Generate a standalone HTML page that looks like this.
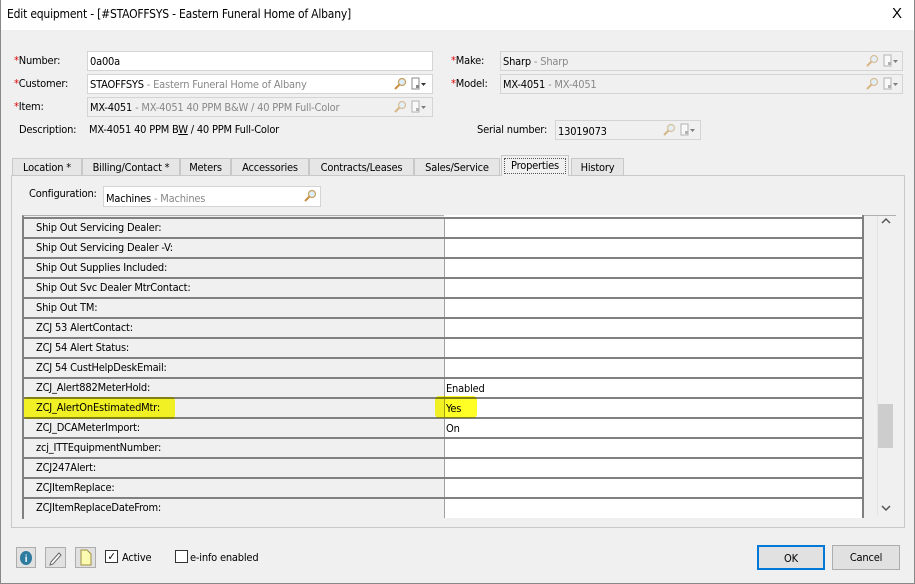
<!DOCTYPE html>
<html><head><style>
body{margin:0;width:915px;height:584px;background:#f0f0f0;font-family:"DejaVu Sans Condensed","Liberation Sans",sans-serif;font-size:11px;color:#000;position:relative;overflow:hidden;letter-spacing:-0.2px}
.a{position:absolute;white-space:nowrap}
.in{position:absolute;background:#fff;border:1px solid #d4d4d4;box-sizing:border-box;padding:3px 0 0 2px}
.gr{background:#f0f0f0}
.r{color:#d00}
.g{color:#888}
.ic{position:absolute;top:2px}
.tab{position:absolute;top:158px;height:17px;border:1px solid #c8c8c8;border-bottom:none;background:#e6e6e6;box-sizing:border-box;text-align:center;padding-top:2px}
.row{position:absolute;left:24px;width:838px;height:20px;border-top:2px solid #808080;box-sizing:border-box}
.row .l{position:absolute;left:0;top:0;width:418px;height:18px;background:#f0f0f0;padding:2px 0 0 12px;box-sizing:border-box}
.row .v{position:absolute;left:420px;top:0;width:418px;height:18px;background:#fff;padding:3px 0 0 1px;box-sizing:border-box;border-left:1px solid #a0a0a0}
.btn{position:absolute;border:1px solid #adadad;background:#e1e1e1;box-sizing:border-box;text-align:center;padding-top:5px}
</style></head><body>
<div class="a" style="left:0;top:0;width:915px;height:30px;background:#fff"></div>
<div class="a" style="left:0;top:0;width:1px;height:584px;background:#888"></div>
<div class="a" style="left:914px;top:0;width:1px;height:584px;background:#888"></div>
<div class="a" style="left:0;top:583px;width:915px;height:1px;background:#888"></div>
<div class="a" style="left:7px;top:7px;font-size:12px">Edit equipment - [#STAOFFSYS - Eastern Funeral Home of Albany]</div>
<div class="a" style="left:892px;top:5px;font-size:15px;font-family:'Liberation Sans',sans-serif">X</div>

<svg width="0" height="0" style="position:absolute"><defs>
<g id="mg"><circle cx="9" cy="5" r="3.5" fill="#dbeefa" stroke="#c8a060" stroke-width="1.2"/><line x1="6.5" y1="7.5" x2="2" y2="12" stroke="#c89040" stroke-width="2"/></g>
<g id="dc"><rect x="1" y="1" width="7" height="11" fill="#fff" stroke="#8a8a8a"/><rect x="5" y="8" width="3" height="3" fill="#8a8a8a"/><path d="M10 6h5l-2.5 3z" fill="#333"/></g>
</defs></svg>

<div class="a" style="left:14px;top:54px"><span class="r">*</span>Number:</div>
<div class="in" style="left:87px;top:51px;width:346px;height:20px">0a00a</div>
<div class="a" style="left:14px;top:77px"><span class="r">*</span>Customer:</div>
<div class="in" style="left:87px;top:74px;width:346px;height:20px">STAOFFSYS <span class="g">- Eastern Funeral Home of Albany</span>
<svg class="ic" style="left:305px" width="36" height="15"><use href="#mg"/><g transform="translate(18,0)"><use href="#dc"/></g></svg></div>
<div class="a" style="left:14px;top:100px"><span class="r">*</span>Item:</div>
<div class="in gr" style="left:87px;top:97px;width:346px;height:20px">MX-4051 <span class="g">- MX-4051 40 PPM B&amp;W / 40 PPM Full-Color</span>
<svg class="ic" style="left:305px;opacity:.6" width="36" height="15"><use href="#mg"/><g transform="translate(18,0)"><use href="#dc"/></g></svg></div>
<div class="a" style="left:19px;top:123px">Description:</div>
<div class="a" style="left:89px;top:123px">MX-4051 40 PPM B<u>W</u> / 40 PPM Full-Color</div>

<div class="a" style="left:451px;top:54px"><span class="r">*</span>Make:</div>
<div class="in gr" style="left:500px;top:51px;width:403px;height:20px">Sharp <span class="g">- Sharp</span>
<svg class="ic" style="left:364px;opacity:.6" width="36" height="15"><use href="#mg"/><g transform="translate(18,0)"><use href="#dc"/></g></svg></div>
<div class="a" style="left:451px;top:77px"><span class="r">*</span>Model:</div>
<div class="in gr" style="left:500px;top:74px;width:403px;height:20px">MX-4051 <span class="g">- MX-4051</span>
<svg class="ic" style="left:364px;opacity:.6" width="36" height="15"><use href="#mg"/><g transform="translate(18,0)"><use href="#dc"/></g></svg></div>
<div class="a" style="left:477px;top:123px">Serial number:</div>
<div class="in gr" style="left:555px;top:120px;width:146px;height:20px;padding-top:4px">13019073
<svg class="ic" style="left:106px;opacity:.6" width="36" height="15"><use href="#mg"/><g transform="translate(18,0)"><use href="#dc"/></g></svg></div>

<div class="tab" style="left:12px;width:70px">Location *</div>
<div class="tab" style="left:82px;width:98px">Billing/Contact *</div>
<div class="tab" style="left:180px;width:51px">Meters</div>
<div class="tab" style="left:231px;width:78px">Accessories</div>
<div class="tab" style="left:309px;width:105px">Contracts/Leases</div>
<div class="tab" style="left:414px;width:86px">Sales/Service</div>
<div class="tab" style="left:571px;width:53px">History</div>
<div class="a" style="left:11px;top:175px;width:894px;height:353px;border:1px solid #c8c8c8;box-sizing:border-box;background:#f0f0f0"></div>
<div class="tab" style="left:501px;top:155px;width:68px;height:21px;background:#f0f0f0;padding-top:1px"><div style="border:1px dotted #555;margin:1px 2px;padding:0 0 1px">Properties</div></div>

<div class="a" style="left:29px;top:187px">Configuration:</div>
<div class="in" style="left:103px;top:186px;width:218px;height:21px;padding-top:5px">Machines <span class="g">- Machines</span>
<svg class="ic" style="left:199px;top:2px" width="16" height="15"><use href="#mg"/></svg></div>

<div class="a" style="left:22px;top:215px;width:872px;height:303px;background:#f0f0f0;border-left:2px solid #808080;border-top:1px solid #b0b0b0;overflow:hidden">
</div>
<div class="a" style="left:862px;top:215px;width:2px;height:303px;background:#808080"></div>
<div class="a" style="left:444px;top:215px;width:418px;height:3px;background:#fff"></div>
<div class="a" style="left:877px;top:216px;width:16px;height:300px;background:#f0f0f0;border-left:1px solid #e4e4e4"></div>
<div class="a" style="left:878px;top:404px;width:15px;height:44px;background:#cdcdcd"></div>
<svg class="a" style="left:880px;top:216px" width="12" height="10"><path d="M2 7l4-4 4 4" fill="none" stroke="#555" stroke-width="1.5"/></svg>
<svg class="a" style="left:880px;top:503px" width="12" height="10"><path d="M2 3l4 4 4-4" fill="none" stroke="#555" stroke-width="1.5"/></svg>

<div class="row" style="top:217px"><div class="l">Ship Out Servicing Dealer:</div><div class="v"></div></div>
<div class="row" style="top:237px"><div class="l">Ship Out Servicing Dealer -V:</div><div class="v"></div></div>
<div class="row" style="top:257px"><div class="l">Ship Out Supplies Included:</div><div class="v"></div></div>
<div class="row" style="top:277px"><div class="l">Ship Out Svc Dealer MtrContact:</div><div class="v"></div></div>
<div class="row" style="top:297px"><div class="l">Ship Out TM:</div><div class="v"></div></div>
<div class="row" style="top:317px"><div class="l">ZCJ 53 AlertContact:</div><div class="v"></div></div>
<div class="row" style="top:337px"><div class="l">ZCJ 54 Alert Status:</div><div class="v"></div></div>
<div class="row" style="top:357px"><div class="l">ZCJ 54 CustHelpDeskEmail:</div><div class="v"></div></div>
<div class="row" style="top:377px"><div class="l">ZCJ_Alert882MeterHold:</div><div class="v">Enabled</div></div>
<div class="row" style="top:397px"><div class="l">ZCJ_AlertOnEstimatedMtr:</div><div class="v">Yes</div></div>
<div class="row" style="top:417px"><div class="l">ZCJ_DCAMeterImport:</div><div class="v">On</div></div>
<div class="row" style="top:437px"><div class="l">zcj_ITTEquipmentNumber:</div><div class="v"></div></div>
<div class="row" style="top:457px"><div class="l">ZCJ247Alert:</div><div class="v"></div></div>
<div class="row" style="top:477px"><div class="l">ZCJItemReplace:</div><div class="v"></div></div>
<div class="row" style="top:497px;height:21px"><div class="l" style="height:19px">ZCJItemReplaceDateFrom:</div><div class="v" style="height:19px"></div></div>
<div class="a" style="left:24px;top:397px;width:151px;height:22px;background:rgba(255,255,0,.85);border-radius:3px;mix-blend-mode:multiply"></div>
<div class="a" style="left:435px;top:396px;width:42px;height:22px;background:rgba(255,255,0,.85);border-radius:4px;mix-blend-mode:multiply"></div>

<div class="a" style="left:16px;top:547px;width:20px;height:21px;border:1px solid #adadad;box-sizing:border-box;background:#e1e1e1"><svg width="18" height="19"><ellipse cx="9" cy="10" rx="6" ry="7" fill="#2e7ca0"/><text x="9" y="14" fill="#fff" font-size="10" font-weight="bold" text-anchor="middle" font-family="Liberation Sans">i</text></svg></div>
<div class="a" style="left:45px;top:547px;width:21px;height:21px;border:1px solid #adadad;box-sizing:border-box;background:#e1e1e1"><svg width="19" height="19"><path d="M5 14l8-9 2 2-8 9-3 1z" fill="#fff" stroke="#666"/></svg></div>
<div class="a" style="left:75px;top:547px;width:21px;height:21px;border:1px solid #adadad;box-sizing:border-box;background:#e1e1e1"><svg width="19" height="19"><path d="M5 2h6l4 4v11H5z" fill="#fafab0" stroke="#a09040"/></svg></div>
<div class="a" style="left:105px;top:550px;width:13px;height:13px;border:1px solid #333;box-sizing:border-box;background:#fff;font-size:11px;line-height:11px;text-align:center">✓</div>
<div class="a" style="left:122px;top:551px">Active</div>
<div class="a" style="left:175px;top:550px;width:13px;height:13px;border:1px solid #333;box-sizing:border-box;background:#fff"></div>
<div class="a" style="left:190px;top:551px">e-info enabled</div>
<div class="btn" style="left:757px;top:545px;width:68px;height:25px;border:2px solid #0078d7">OK</div>
<div class="btn" style="left:832px;top:545px;width:68px;height:25px">Cancel</div>
</body></html>
